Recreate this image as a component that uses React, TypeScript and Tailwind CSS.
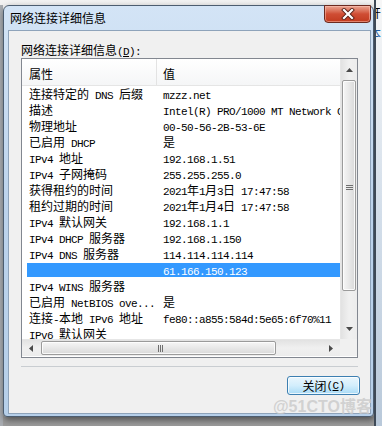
import React from "react";

type Row = { name: string; value: string; selected?: boolean };

const rows: Row[] = [
  { name: "连接特定的 DNS 后缀", value: "mzzz.net" },
  { name: "描述", value: "Intel(R) PRO/1000 MT Network Connection" },
  { name: "物理地址", value: "00-50-56-2B-53-6E" },
  { name: "已启用 DHCP", value: "是" },
  { name: "IPv4 地址", value: "192.168.1.51" },
  { name: "IPv4 子网掩码", value: "255.255.255.0" },
  { name: "获得租约的时间", value: "2021年1月3日 17:47:58" },
  { name: "租约过期的时间", value: "2021年1月4日 17:47:58" },
  { name: "IPv4 默认网关", value: "192.168.1.1" },
  { name: "IPv4 DHCP 服务器", value: "192.168.1.150" },
  { name: "IPv4 DNS 服务器", value: "114.114.114.114" },
  { name: "", value: "61.166.150.123", selected: true },
  { name: "IPv4 WINS 服务器", value: "" },
  { name: "已启用 NetBIOS ove...", value: "是" },
  { name: "连接-本地 IPv6 地址", value: "fe80::a855:584d:5e65:6f70%11" },
  { name: "IPv6 默认网关", value: "" },
];

// latin runs in a mono face (6px per char), CJK in Noto
function Txt({ s }: { s: string }) {
  const parts = s.split(/([\x20-\x7e]+)/);
  return (
    <>
      {parts.map((p, i) =>
        p === "" ? null : /^[\x20-\x7e]+$/.test(p) ? (
          <span key={i} className="font-['Liberation_Mono',monospace] text-[11px] tracking-[-0.6px] whitespace-pre">
            {p}
          </span>
        ) : (
          <span key={i}>{p}</span>
        )
      )}
    </>
  );
}

function Arrow({ dir }: { dir: "up" | "down" | "left" | "right" }) {
  const pts = {
    up: "0,4 7,4 3.5,0",
    down: "0,0 7,0 3.5,4",
    left: "4,0 4,7 0,3.5",
    right: "0,0 0,7 4,3.5",
  }[dir];
  const vert = dir === "up" || dir === "down";
  return (
    <svg width={vert ? 7 : 4} height={vert ? 4 : 7} viewBox={vert ? "0 0 7 4" : "0 0 4 7"}>
      <polygon points={pts} fill="#4a4a4a" />
    </svg>
  );
}

function VScroll() {
  return (
    <div className="w-[17px] flex flex-col bg-linear-to-r from-[#e2e2e2] via-[#f0f0f0] to-[#ececec] border-l border-[#e6e6e6]">
      <div className="h-[21px] flex items-center justify-center">
        <Arrow dir="up" />
      </div>
      <div className="h-[211px] mx-[1px] rounded-[2px] border border-[#9b9b9b] bg-linear-to-r from-[#f6f6f6] via-[#e8e8e8] to-[#d9d9d9] shadow-[inset_0_0_0_1px_rgba(255,255,255,0.8)] flex items-center justify-center">
        <div className="flex flex-col gap-[1px] mt-[4px]">
          <div className="w-[7px] h-[1px] bg-[#6f6f6f]" />
          <div className="w-[7px] h-[1px] bg-[#6f6f6f]" />
          <div className="w-[7px] h-[1px] bg-[#6f6f6f]" />
        </div>
      </div>
      <div className="flex-1" />
      <div className="h-[21px] flex items-center justify-center">
        <Arrow dir="down" />
      </div>
    </div>
  );
}

function HScroll() {
  return (
    <div className="flex-1 flex bg-linear-to-b from-[#e2e2e2] via-[#f0f0f0] to-[#ececec] border-t border-[#e6e6e6]">
      <div className="w-[18px] flex items-center justify-center">
        <Arrow dir="left" />
      </div>
      <div className="w-[235px] ml-[1px] my-[1px] rounded-[2px] border border-[#9b9b9b] bg-linear-to-b from-[#f6f6f6] via-[#e8e8e8] to-[#d9d9d9] shadow-[inset_0_0_0_1px_rgba(255,255,255,0.8)] flex items-center justify-center">
        <div className="flex gap-[1px] ml-[4px]">
          <div className="w-[1px] h-[7px] bg-[#6f6f6f]" />
          <div className="w-[1px] h-[7px] bg-[#6f6f6f]" />
          <div className="w-[1px] h-[7px] bg-[#6f6f6f]" />
        </div>
      </div>
      <div className="flex-1" />
      <div className="w-[18px] flex items-center justify-center">
        <Arrow dir="right" />
      </div>
    </div>
  );
}

export default function App() {
  return (
    <div className="relative w-[382px] h-[426px] overflow-hidden flex bg-linear-to-b from-[#f3f3f3] via-[#c9c9c9] to-[#9c9c9c] font-['Noto_Sans_CJK_SC',sans-serif] text-[12px] text-black">
      <div className="w-[3px] mt-[5px] bg-[#a9adb2]" />

      {/* Window */}
      <div className="mt-[5px] w-[371px] h-[412px] flex flex-col rounded-t-[6px] rounded-b-[4px] border border-[#4c5d70] bg-linear-to-b from-[#d3e4f6] via-[#bcd3ec] to-[#b6cfe9] shadow-[1px_3px_7px_rgba(0,0,0,0.5)]">
        {/* Title bar */}
        <div className="h-[24px] flex justify-between">
          <div className="pl-[6px] pt-[5px] leading-[14px] text-[12px]">网络连接详细信息</div>
          <div className="-mt-[1px] mr-[2px] w-[47px] h-[18px] rounded-b-[4px] border border-[#6b2a20] bg-linear-to-b from-[#eaa592] via-[#cf4d34] to-[#c23a1e] shadow-[inset_0_0_0_1px_rgba(255,200,185,0.5)] flex items-center justify-center">
            <svg width="14" height="12" viewBox="0 0 14 12">
              <path d="M3 2 L11 10 M11 2 L3 10" stroke="#5a2218" strokeWidth="4" strokeLinecap="square" />
              <path d="M3 2 L11 10 M11 2 L3 10" stroke="#ffffff" strokeWidth="2.2" strokeLinecap="square" />
            </svg>
          </div>
        </div>

        {/* Client area */}
        <div className="ml-[4px] mr-[2px] h-[384px] border border-[#8ea3ba] bg-[#f0f0f0] flex flex-col">
          <div className="mt-[12px] ml-[12px] h-[14px] leading-[14px]">
            网络连接详细信息
            <span className="font-['Liberation_Mono',monospace] text-[11px] tracking-[-0.6px]">
              (<span className="underline">D</span>):
            </span>
          </div>

          {/* List view */}
          <div className="mx-[12px] mt-[1px] h-[300px] border border-[#828790] bg-white flex flex-col">
            <div className="h-[280px] flex">
              <div className="flex-1 overflow-hidden">
                <div className="h-[27px] flex border-b border-[#e5e5e5] bg-linear-to-b from-white to-[#f5f6f7]">
                  <div className="w-[135px] pl-[7px] pt-[3px] flex items-center border-r border-[#e3e3e3]">属性</div>
                  <div className="pl-[6px] pt-[3px] flex items-center">值</div>
                </div>
                {rows.map((r, i) =>
                  r.selected ? (
                    <div key={i} className="h-[16px] flex pl-[5px] pt-[1px]">
                      <div className="flex-1 h-[14px] leading-[14px] bg-[#3399ff] text-white flex whitespace-nowrap">
                        <div className="w-[130px]" />
                        <div className="pl-[6px]">
                          <Txt s={r.value} />
                        </div>
                      </div>
                    </div>
                  ) : (
                    <div key={i} className="h-[16px] leading-[16px] flex whitespace-nowrap">
                      <div className="w-[135px] shrink-0 pl-[7px] overflow-hidden">
                        <Txt s={r.name} />
                      </div>
                      <div className="pl-[6px]">
                        <Txt s={r.value} />
                      </div>
                    </div>
                  )
                )}
              </div>
              <VScroll />
            </div>
            <div className="h-[17px] flex">
              <HScroll />
              <div className="w-[17px] bg-[#f0f0f0]" />
            </div>
          </div>

          <div className="mx-[12px] mt-[8px] h-[1px] bg-[#c9cdd1]" />

          <div className="mt-[9px] pr-[10px] flex justify-end">
            <div className="w-[73px] h-[19px] rounded-[3px] border border-[#3c7fb1] bg-linear-to-b from-[#eaf6fd] via-[#d3eefc] to-[#a9dbf6] shadow-[inset_0_0_0_1px_rgba(255,255,255,0.75)] flex items-center justify-center leading-[14px]">
              关闭
              <span className="font-['Liberation_Mono',monospace] text-[11px] tracking-[-0.6px]">
                (<span className="underline">C</span>)
              </span>
            </div>
          </div>
        </div>
      </div>

      {/* Desktop strip to the right */}
      <div className="flex-1 border-l-2 border-[#3e4956] bg-linear-to-b from-[#f7f7f7] via-[#d3deea] to-[#b9c9da] overflow-hidden">
        <div className="-ml-[7px] mt-[6px] leading-[14px]">开</div>
        <div className="-ml-[7px] mt-[6px] leading-[14px] text-[#1f5fa8]">本</div>
      </div>

      {/* Watermark */}
      <div className="absolute left-[273px] top-[398px] text-[16px] leading-[17px] font-['Liberation_Sans','Noto_Sans_CJK_SC',sans-serif] font-bold text-[#c9c9c9]/80">
        @51CTO博客
      </div>
    </div>
  );
}
